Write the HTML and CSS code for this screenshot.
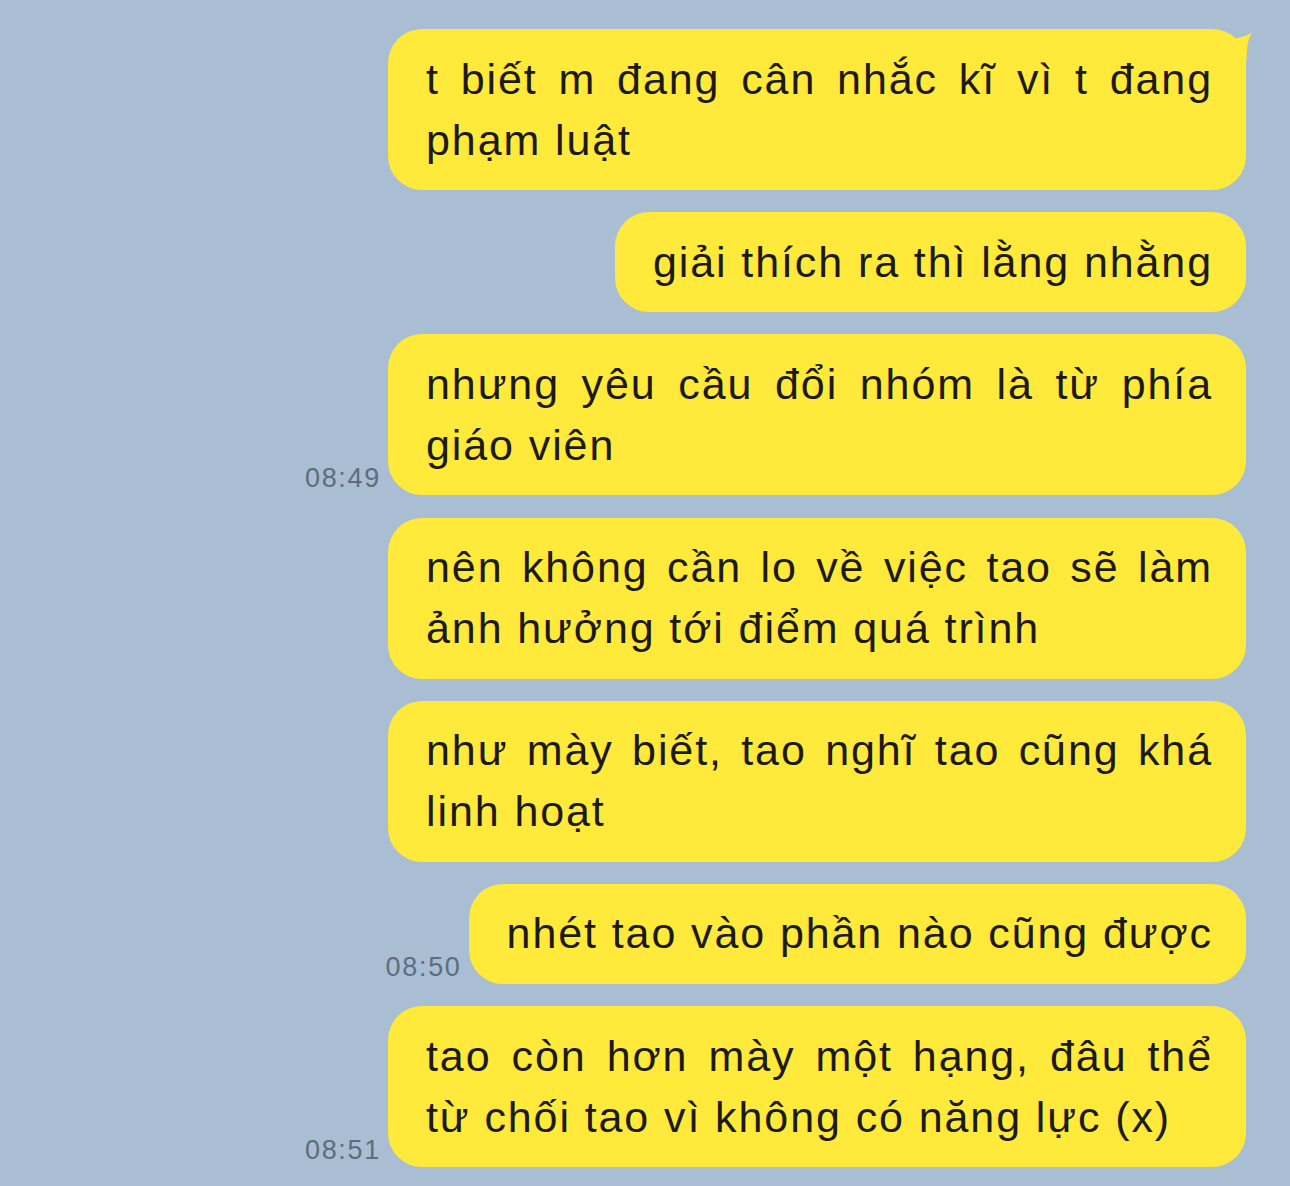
FILE: index.html
```html
<!DOCTYPE html>
<html lang="vi">
<head>
    <meta charset="UTF-8">
    <meta name="viewport" content="width=device-width, initial-scale=1.0">
    <title>Chat</title>
    <link rel="stylesheet" href="styles.css">
</head>
<body>
    <div class="chat">
        <div class="row">
            <div class="bubble first">
                t biết m đang cân nhắc kĩ vì t đang phạm luật
                <svg class="tail" width="36" height="36" viewBox="0 0 36 36">
                    <path d="M15 9 C22 9 29 7 34 3 C31 9 29 15 29 22 L28 36 L10 36 Z" fill="#ffe93b"/>
                </svg>
            </div>
        </div>
        <div class="row">
            <div class="bubble">giải thích ra thì lằng nhằng</div>
        </div>
        <div class="row">
            <span class="time">08:49</span>
            <div class="bubble">nhưng yêu cầu đổi nhóm là từ phía giáo viên</div>
        </div>
        <div class="row">
            <div class="bubble">nên không cần lo về việc tao sẽ làm ảnh hưởng tới điểm quá trình</div>
        </div>
        <div class="row">
            <div class="bubble">như mày biết, tao nghĩ tao cũng khá linh hoạt</div>
        </div>
        <div class="row">
            <span class="time">08:50</span>
            <div class="bubble">nhét tao vào phần nào cũng được</div>
        </div>
        <div class="row">
            <span class="time">08:51</span>
            <div class="bubble">tao còn hơn mày một hạng, đâu thể từ chối tao vì không có năng lực (x)</div>
        </div>
    </div>
</body>
</html>
```

FILE: styles.css
```css
body {
    margin: 0;
    background: #a9bed3;
    font-family: "Liberation Sans", Arial, sans-serif;
    color: #1c1a14;
}
.chat {
    display: flex;
    flex-direction: column;
    gap: 22.2px;
    padding: 29px 44px 19px 0;
}
.row {
    display: flex;
    justify-content: flex-end;
    align-items: flex-end;
    gap: 7px;
}
.time {
    font-size: 27px;
    letter-spacing: 1.7px;
    color: #5d6d7e;
    padding-bottom: 2px;
    line-height: 30px;
}
.bubble {
    position: relative;
    max-width: 787px;
    background: #ffe93b;
    border-radius: 34px;
    padding: 19.5px 33px 19.5px 38px;
    font-size: 43px;
    line-height: 61px;
    letter-spacing: 1.9px;
    text-align: justify;
}
.tail {
    position: absolute;
    top: 0;
    right: -8px;
}
```
